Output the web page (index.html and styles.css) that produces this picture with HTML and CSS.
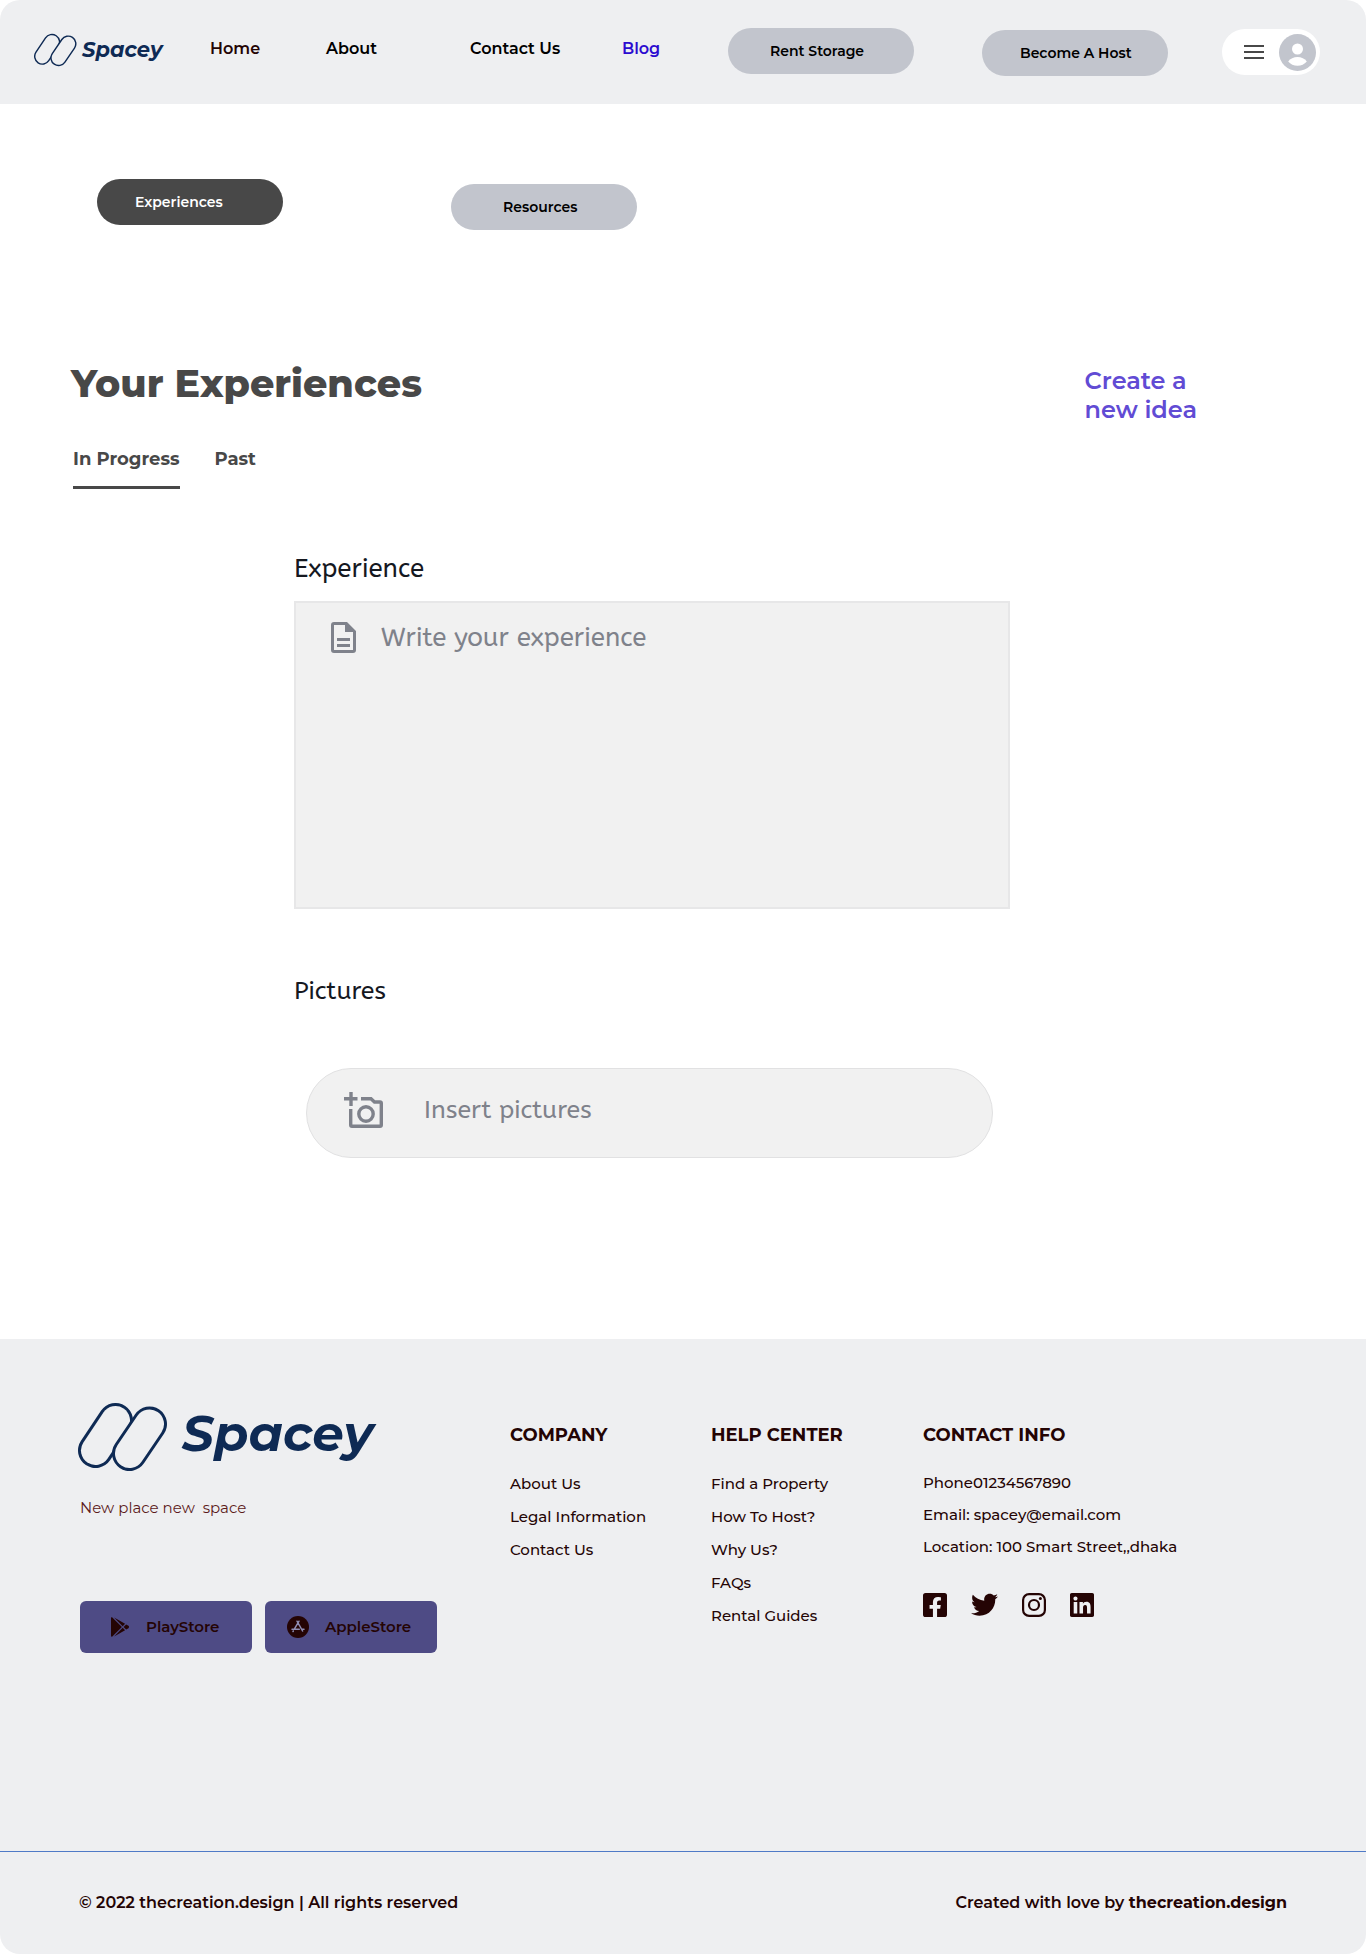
FILE: index.html
```html
<!DOCTYPE html>
<html lang="en">
<head>
<meta charset="utf-8">
<meta name="viewport" content="width=device-width, initial-scale=1">
<title>Spacey – Your Experiences</title>
<link rel="stylesheet" href="styles.css">
</head>
<body>
<header class="header">
  <a class="logo" href="#">
    <svg class="logo-mark" viewBox="0 0 90 68" aria-hidden="true">
      <g fill="none" stroke-linecap="round">
        <path class="mark-line" d="M37.500 17.500 17.500 47.500"/><path class="mark-fill" d="M37.500 17.500 17.500 47.500"/>
        <path class="mark-line" d="M71.500 21 51.500 50.500"/><path class="mark-fill" d="M71.500 21 51.500 50.500"/>
      </g>
    </svg>
    <span class="logo-text">Spacey</span>
  </a>
  <a class="nav-link nav-home" href="#">Home</a>
  <a class="nav-link" href="#">About</a>
  <a class="nav-link" href="#">Contact Us</a>
  <a class="nav-link nav-active" href="#">Blog</a>
  <button class="pill pill-rent" type="button">Rent Storage</button>
  <button class="pill pill-host" type="button">Become A Host</button>
  <button class="profile" type="button" aria-label="Account menu">
    <svg class="menu-icon" viewBox="0 0 20 14" aria-hidden="true"><path d="M0 1h20M0 7h20M0 13h20" stroke="#484848" stroke-width="2"/></svg>
    <svg class="avatar" viewBox="0 0 37 37" aria-hidden="true"><circle cx="18.500" cy="18.500" r="18.500" fill="#c2c5cd"/><circle cx="18.500" cy="15" r="5.500" fill="#fff"/><path d="M9.200 27.500c2-3 5.500-4.500 9.300-4.500s7.300 1.500 9.300 4.500c-2.300 2.700-5.600 4.300-9.300 4.300s-7-1.600-9.300-4.300z" fill="#fff"/></svg>
  </button>
</header>

<main>
  <div class="switcher">
    <button class="pill pill-dark" type="button">Experiences</button>
    <button class="pill pill-resources" type="button">Resources</button>
  </div>

  <div class="title-row">
    <h1 class="title">Your Experiences</h1>
    <a class="create" href="#">Create a<br>new idea</a>
  </div>

  <nav class="tabs">
    <a class="tab tab-current" href="#">In Progress</a>
    <a class="tab" href="#">Past</a>
  </nav>

  <form class="form">
    <label class="label label-large" for="experience">Experience</label>
    <div class="text-field">
      <svg class="doc-icon" viewBox="0 0 25 31" aria-hidden="true"><path fill="#7f828b" fill-rule="evenodd" d="M3 0h13l9 9v19a3 3 0 0 1-3 3H3a3 3 0 0 1-3-3V3a3 3 0 0 1 3-3zm0 3v25h19V10h-8V3z"/><path d="M6 17.500h13M6 23.500h13" stroke="#7f828b" stroke-width="2.800"/></svg>
      <textarea class="textarea" id="experience" placeholder="Write your experience"></textarea>
    </div>
    <label class="label" for="pictures">Pictures</label>
    <div class="picture-field">
      <svg class="camera-icon" viewBox="0 0 39 36" aria-hidden="true"><g fill="none" stroke="#7f828b" stroke-width="3.400"><path d="M7 0v14M0 6.700h13.500"/><path d="M17 6.700h10l3.500 3.300H36a1.300 1.300 0 0 1 1.300 1.300V33a1.300 1.300 0 0 1-1.300 1.300H8A1.300 1.300 0 0 1 6.700 33V17"/><circle cx="22" cy="22" r="7.200"/></g></svg>
      <input class="picture-input" id="pictures" type="text" placeholder="Insert pictures">
    </div>
  </form>
</main>

<footer class="footer">
  <div class="footer-main">
    <section class="brand">
      <a class="logo logo-large" href="#">
        <svg class="logo-mark" viewBox="0 0 90 68" aria-hidden="true">
          <g fill="none" stroke-linecap="round">
            <path class="mark-line" d="M37.500 17.500 17.500 47.500"/><path class="mark-fill" d="M37.500 17.500 17.500 47.500"/>
            <path class="mark-line" d="M71.500 21 51.500 50.500"/><path class="mark-fill" d="M71.500 21 51.500 50.500"/>
          </g>
        </svg>
        <span class="logo-text">Spacey</span>
      </a>
      <p class="tagline">New place new&nbsp; space</p>
      <div class="stores">
        <a class="store" href="#">
          <svg class="store-icon" viewBox="0 0 512 512" aria-hidden="true"><path d="M325.3 234.3L104.6 13l280.8 161.2-60.1 60.1zM47 0C34 6.800 25.300 19.200 25.300 35.300v441.300c0 16.100 8.700 28.500 21.700 35.300l256.600-256L47 0zm425.200 225.600l-58.900-34.100-65.700 64.500 65.700 64.500 60.100-34.100c18-14.300 18-46.500-1.200-60.800zM104.600 499l280.800-161.200-60.100-60.100L104.600 499z"/></svg>
          PlayStore
        </a>
        <a class="store" href="#">
          <svg class="store-icon store-icon-round" viewBox="0 0 22 22" aria-hidden="true"><circle cx="11" cy="11" r="11"/><g fill="none" stroke="#8f8db3" stroke-width="1.500" stroke-linecap="round"><path d="M12 5.200 7.300 13.200M10 5.200l5.600 9.800M5 13.300h7.300M14.800 13.300h2.200M6.300 15l-.3.500"/></g></svg>
          AppleStore
        </a>
      </div>
    </section>
    <nav class="column">
      <h2 class="column-title">COMPANY</h2>
      <a class="column-link" href="#">About Us</a>
      <a class="column-link" href="#">Legal Information</a>
      <a class="column-link" href="#">Contact Us</a>
    </nav>
    <nav class="column">
      <h2 class="column-title">HELP CENTER</h2>
      <a class="column-link" href="#">Find a Property</a>
      <a class="column-link" href="#">How To Host?</a>
      <a class="column-link" href="#">Why Us?</a>
      <a class="column-link" href="#">FAQs</a>
      <a class="column-link" href="#">Rental Guides</a>
    </nav>
    <section class="column column-contact">
      <h2 class="column-title">CONTACT INFO</h2>
      <p class="column-link">Phone01234567890</p>
      <p class="column-link">Email: spacey@email.com</p>
      <p class="column-link">Location: 100 Smart Street,,dhaka</p>
      <div class="socials">
        <a class="social" href="#" aria-label="Facebook"><svg viewBox="0 32 448 448"><path d="M400 32H48A48 48 0 0 0 0 80v352a48 48 0 0 0 48 48h137.250V327.690h-63V256h63v-54.640c0-62.150 37-96.480 93.670-96.480 27.140 0 55.520 4.840 55.520 4.840v61h-31.270c-30.810 0-40.420 19.120-40.420 38.730V256h68.780l-11 71.690h-57.780V480H400a48 48 0 0 0 48-48V80a48 48 0 0 0-48-48z"/></svg></a>
        <a class="social social-wide" href="#" aria-label="Twitter"><svg viewBox="0 32 512 448"><path d="M459.370 151.716c.325 4.548.325 9.097.325 13.645 0 138.720-105.583 298.558-298.558 298.558-59.452 0-114.680-17.219-161.137-47.106 8.447.974 16.568 1.299 25.340 1.299 49.055 0 94.213-16.568 130.274-44.832-46.132-.975-84.792-31.188-98.112-72.772 6.498.974 12.995 1.624 19.818 1.624 9.421 0 18.843-1.300 27.614-3.573-48.081-9.747-84.143-51.980-84.143-102.985v-1.299c13.969 7.797 30.214 12.670 47.431 13.319-28.264-18.843-46.781-51.005-46.781-87.391 0-19.492 5.197-37.360 14.294-52.954 51.655 63.675 129.300 105.258 216.365 109.807-1.624-7.797-2.599-15.918-2.599-24.040 0-57.828 46.782-104.934 104.934-104.934 30.213 0 57.502 12.670 76.670 33.137 23.715-4.548 46.456-13.320 66.599-25.340-7.798 24.366-24.366 44.833-46.132 57.827 21.117-2.273 41.584-8.122 60.426-16.243-14.292 20.791-32.161 39.308-52.628 54.253z"/></svg></a>
        <a class="social" href="#" aria-label="Instagram"><svg viewBox="0 0 24 24"><g fill="none" stroke="#240404" stroke-width="2.200"><rect x="1.100" y="1.100" width="21.800" height="21.800" rx="6"/><circle cx="12" cy="12" r="5"/></g><circle cx="18.400" cy="5.600" r="1.500"/></svg></a>
        <a class="social" href="#" aria-label="LinkedIn"><svg viewBox="0 32 448 448"><path d="M416 32H31.900C14.300 32 0 46.500 0 64.300v383.400C0 465.500 14.300 480 31.900 480H416c17.600 0 32-14.500 32-32.300V64.300c0-17.800-14.400-32.300-32-32.300zM135.400 416H69V202.200h66.500V416zm-33.200-243c-21.300 0-38.500-17.300-38.500-38.500S80.900 96 102.200 96c21.200 0 38.500 17.300 38.500 38.500 0 21.300-17.200 38.500-38.500 38.500zm282.100 243h-66.400V312c0-24.800-.5-56.700-34.500-56.700-34.600 0-39.900 27-39.900 54.900V416h-66.400V202.200h63.700v29.200h.9c8.900-16.800 30.600-34.500 62.900-34.500 67.200 0 79.700 44.300 79.700 101.900V416z"/></svg></a>
      </div>
    </section>
  </div>
  <div class="footer-bottom">
    <span>© 2022 thecreation.design | All rights reserved</span>
    <span>Created with love by <strong>thecreation.design</strong></span>
  </div>
</footer>
</body>
</html>
```
FILE: styles.css
```css
* {
  box-sizing: border-box;
}

body {
  margin: 0;
  background: #fff;
  color: #240404;
  font-family: Montserrat, Inter, sans-serif;
  font-size: 16px;
  line-height: 20px;
}

a {
  color: inherit;
  text-decoration: none;
}

h1, h2, p {
  margin: 0;
}

button {
  border: 0;
  padding: 0;
  font-family: inherit;
}

svg {
  display: block;
  flex: none;
}

/* Header */
.header {
  display: grid;
  grid-template-columns: 176fr 116fr 144fr 152fr 106fr 254fr 240fr 98px;
  align-items: center;
  height: 104px;
  padding: 0 46px 0 34px;
  background: #eeeff1;
  border-radius: 20px 20px 0 0;
}

.logo {
  display: flex;
  align-items: center;
  gap: 5px;
  padding-bottom: 4px;
  color: #0e2a54;
}

.logo-mark {
  width: 43px;
  height: 34px;
}

.mark-line {
  stroke: #0e2a54;
  stroke-width: 35px;
}

.mark-fill {
  stroke: #eeeff1;
  stroke-width: 29px;
}

.logo-text {
  font-size: 21px;
  font-weight: 700;
  font-style: italic;
}

.nav-link {
  padding-bottom: 6px;
  color: #000;
  font-weight: 600;
  white-space: nowrap;
}

.nav-home {
  color: #240404;
}

.nav-active {
  color: #2c0bd0;
}

.pill {
  width: 186px;
  height: 46px;
  border-radius: 23px;
  background: #c2c5cd;
  color: #000;
  font-size: 14px;
  font-weight: 600;
  text-align: left;
  white-space: nowrap;
}

.pill-rent {
  margin-bottom: 2px;
  padding-left: 42px;
}

.pill-host {
  margin-top: 2px;
  padding-left: 38px;
}

.profile {
  display: flex;
  align-items: center;
  justify-content: flex-end;
  gap: 15px;
  height: 46px;
  padding-right: 4px;
  border-radius: 23px;
  background: #fff;
}

.menu-icon {
  width: 20px;
  height: 14px;
}

.avatar {
  width: 37px;
  height: 37px;
}

/* Page content */
.switcher {
  display: flex;
  gap: 168px;
  height: 51px;
  margin-top: 75px;
  padding-left: 97px;
}

.pill-dark {
  padding-left: 38px;
  background: #484848;
  color: #fff;
}

.pill-resources {
  align-self: flex-end;
  padding-left: 52px;
}

.title-row {
  display: flex;
  justify-content: space-between;
  margin-top: 130px;
  padding: 0 169px 0 71px;
}

.title {
  color: #484848;
  font-size: 38px;
  font-weight: 800;
  line-height: 48px;
}

.create {
  padding-top: 6px;
  color: #614bd4;
  font-size: 24px;
  font-weight: 600;
  line-height: 29px;
}

.tabs {
  display: flex;
  gap: 35px;
  margin-top: 24px;
  padding-left: 73px;
}

.tab {
  height: 41px;
  color: #484848;
  font-size: 18px;
  font-weight: 700;
  line-height: 22px;
}

.tab-current {
  border-bottom: 3px solid #484848;
}

.form {
  display: flex;
  flex-direction: column;
  margin: 64px 356px 0 294px;
  font-family: ABeeZee, "Noto Sans", sans-serif;
}

.label {
  color: #15181f;
  font-size: 25px;
  line-height: 32px;
}

.label-large {
  font-size: 26px;
}

.text-field {
  display: flex;
  gap: 25px;
  height: 308px;
  margin: 16px 0 66px;
  padding: 19px 35px;
  border: 2px solid #e7e7e8;
  background: #f1f1f1;
}

.doc-icon {
  width: 25px;
  height: 31px;
}

.textarea,
.picture-input {
  flex: 1;
  min-width: 0;
  padding: 0;
  border: 0;
  outline: 0;
  background: transparent;
  color: #15181f;
  font-family: inherit;
  font-size: 25px;
  line-height: 32px;
  resize: none;
}

.textarea {
  font-size: 26px;
}

.textarea::placeholder,
.picture-input::placeholder {
  color: #7f828b;
  opacity: 1;
}

.picture-field {
  display: flex;
  align-items: center;
  gap: 41px;
  height: 90px;
  margin: 61px 17px 0 12px;
  padding: 0 37px 6px;
  border: 1px solid #e1e1e2;
  border-radius: 45px;
  background: #f1f1f1;
}

.camera-icon {
  width: 39px;
  height: 36px;
}

/* Footer */
.footer {
  margin-top: 181px;
  border-radius: 0 0 20px 20px;
  background: #eeeff1;
}

.footer-main {
  display: grid;
  grid-template-columns: 430fr 201fr 212fr 364fr;
  min-height: 512px;
  padding: 64px 79px 0 80px;
}

.logo-large {
  gap: 14px;
  margin-left: -2px;
  padding: 0;
}

.logo-large .logo-mark {
  width: 90px;
  height: 68px;
}

.logo-large .logo-text {
  padding-bottom: 6px;
  font-size: 50px;
  line-height: 60px;
}

.tagline {
  margin-top: 27px;
  color: #5c1a1a;
  font-size: 15px;
}

.stores {
  display: flex;
  gap: 13px;
  margin-top: 83px;
}

.store {
  display: flex;
  align-items: center;
  gap: 16px;
  width: 172px;
  height: 52px;
  padding-left: 30px;
  border-radius: 6px;
  background: #4e4b85;
  font-size: 15px;
  font-weight: 600;
}

.store-icon {
  width: 20px;
  height: 20px;
  fill: #240404;
}

.store + .store {
  padding-left: 22px;
}

.store-icon-round {
  width: 22px;
  height: 22px;
}

.column {
  display: flex;
  flex-direction: column;
  padding-top: 21px;
}

.column-title {
  margin-bottom: 21px;
  font-size: 18px;
  font-weight: 700;
  line-height: 22px;
}

.column-link {
  font-size: 15px;
  font-weight: 500;
  line-height: 33px;
}

.column-contact .column-link {
  line-height: 32px;
}

.socials {
  display: flex;
  gap: 24px;
  margin-top: 30px;
}

.social {
  width: 24px;
  height: 24px;
  fill: #240404;
}

.social-wide {
  width: 27px;
}

.footer-bottom {
  display: flex;
  justify-content: space-between;
  padding: 41px 79px;
  border-top: 1px solid #4f7ac7;
  font-weight: 600;
}

.footer-bottom strong {
  font-weight: 700;
}
```
